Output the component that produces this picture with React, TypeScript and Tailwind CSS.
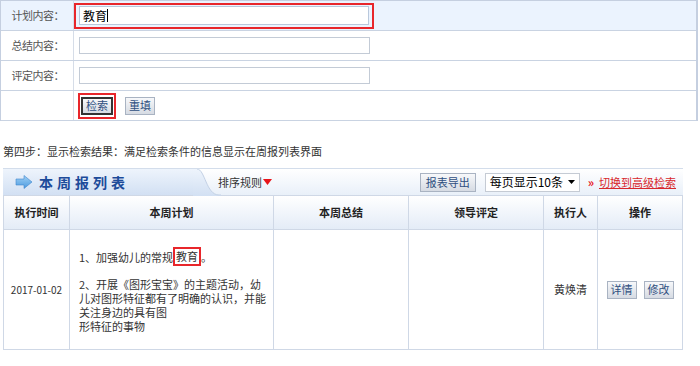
const font = { fontFamily: '"SimSun","Noto Sans CJK SC","Liberation Sans",sans-serif' }

function FormRow({ label, children, bg }: { label: string; children?: React.ReactNode; bg?: string }) {
  return (
    <div className={`grid grid-cols-[73px_1fr] h-[30px] border-b border-[#c9d3e2] ${bg ?? ''}`}>
      <div className="flex items-center justify-end pr-[9px] border-r border-[#d6dde8] text-[11px] tracking-[-0.5px] text-[#555]">
        {label}
      </div>
      <div className="flex items-center pl-[5px]">{children}</div>
    </div>
  )
}

function Btn({ children, focus }: { children: React.ReactNode; focus?: boolean }) {
  return (
    <span
      className={`inline-flex items-center justify-center h-[18px] px-[3px] text-[11px] text-[#2f4f7f] bg-gradient-to-b from-[#f7f8fa] to-[#d6dbe3] border ${
        focus ? 'border-[#333] border-2' : 'border-[#a9b3c2]'
      }`}
    >
      {children}
    </span>
  )
}

export default function App() {
  return (
    <div className="w-[700px] h-[366px] bg-white text-[#333] overflow-hidden" style={font}>
      {/* search form */}
      <div className="w-[698px] border-l border-r-2 border-t border-[#c5cfe0] border-r-[#c5cfe0]">
        <FormRow label="计划内容：" bg="bg-[#ebf3fe]">
          <div className="-ml-[5px] w-[300px] h-[26px] border-2 border-[#e8262b] flex items-center px-[3px]">
            <div className="w-full h-[19px] bg-white border border-[#b9c8dc] flex items-center pl-[3px] text-[12px] text-black">
              教育<span className="w-px h-[13px] bg-black" />
            </div>
          </div>
        </FormRow>
        <FormRow label="总结内容：">
          <div className="w-[291px] h-[17px] bg-white border border-[#c3cbd6]" />
        </FormRow>
        <FormRow label="评定内容：">
          <div className="w-[291px] h-[17px] bg-white border border-[#c3cbd6]" />
        </FormRow>
        <FormRow label="">
          <div className="flex items-center gap-[9px] -ml-[1px]">
            <span className="border-2 border-[#e8262b] p-[1px] h-[26px] flex items-center">
              <Btn focus>检索</Btn>
            </span>
            <Btn>重填</Btn>
          </div>
        </FormRow>
      </div>

      <div className="mt-[23px] pl-[3px] text-[11px] leading-[14px] text-[#333]">
        第四步：显示检索结果：满足检索条件的信息显示在周报列表界面
      </div>

      {/* list */}
      <div className="mt-[10px] ml-[3px] w-[680px]">
        <div className="relative flex items-stretch h-[27px] border-t border-[#d3ddeb] bg-gradient-to-b from-white to-[#e9f0f9]">
          <div className="flex items-center w-[190px] pl-[12px] bg-gradient-to-b from-[#eef4fc] to-[#d2e0f3]">
            <svg width="18" height="14" viewBox="0 0 18 14">
              <defs>
                <linearGradient id="ar" x1="0" y1="0" x2="0" y2="1">
                  <stop offset="0" stopColor="#9fd0f5" />
                  <stop offset="1" stopColor="#4d9be0" />
                </linearGradient>
              </defs>
              <path d="M1 4h8V0.5l8 6.5-8 6.5V10H1z" fill="url(#ar)" stroke="#3f86cc" strokeWidth="0.6" />
            </svg>
            <span className="ml-[6px] text-[14px] font-bold tracking-[4px] text-[#1d4b9a]">本周报列表</span>
          </div>
          <svg width="28" height="27" viewBox="0 0 28 27" preserveAspectRatio="none" className="shrink-0">
            <defs>
              <linearGradient id="tb" x1="0" y1="0" x2="0" y2="1">
                <stop offset="0" stopColor="#eef4fc" />
                <stop offset="1" stopColor="#d2e0f3" />
              </linearGradient>
            </defs>
            <path d="M0 0H4C12 0 13 26 26 26H28V27H0z" fill="url(#tb)" />
            <path d="M4 0C12 0 13 26 26 26H28" fill="none" stroke="#c3d1e5" strokeWidth="1" />
          </svg>
          <div className="flex items-center text-[11px] text-[#333] ml-[-3px]">
            排序规则
            <svg width="9" height="6" viewBox="0 0 9 6" className="ml-[1px]">
              <path d="M0 0h9L4.5 6z" fill="#e8151b" />
            </svg>
          </div>
          <div className="flex-1" />
          <div className="flex items-center">
            <span className="inline-flex items-center justify-center w-[56px] h-[19px] text-[11px] text-[#2f4f7f] bg-gradient-to-b from-[#f7f8fa] to-[#d6dbe3] border border-[#a9b3c2]">
              报表导出
            </span>
            <span className="ml-[9px] inline-flex items-center justify-between w-[95px] h-[19px] bg-white border border-[#c5cbd4] pl-[4px] pr-[4px] text-[12px] text-black">
              每页显示10条
              <svg width="7" height="4" viewBox="0 0 7 4">
                <path d="M0 0h7L3.5 4z" fill="#000" />
              </svg>
            </span>
            <span className="ml-[8px] text-[12px] font-bold text-[#e8151b]">»</span>
            <span className="ml-[5px] mr-[7px] text-[11px] text-[#d8272b] underline">切换到高级检索</span>
          </div>
        </div>

        <div className="border-l border-b border-r border-[#cfd8e6]">
          <div className="grid grid-cols-[66px_204px_135px_135px_54px_1fr] h-[34px] bg-gradient-to-b from-white to-[#e4ecf7] border-t border-[#cfd8e6] text-[11px] font-bold text-[#222]">
            <div className="flex items-center justify-center border-r border-[#cfd8e6]">执行时间</div>
            <div className="flex items-center justify-center border-r border-[#cfd8e6]">本周计划</div>
            <div className="flex items-center justify-center border-r border-[#cfd8e6]">本周总结</div>
            <div className="flex items-center justify-center border-r border-[#cfd8e6]">领导评定</div>
            <div className="flex items-center justify-center border-r border-[#cfd8e6]">执行人</div>
            <div className="flex items-center justify-center">操作</div>
          </div>
          <div className="grid grid-cols-[66px_204px_135px_135px_54px_1fr] h-[120px] border-t border-[#cfd8e6] text-[11px] text-[#333]">
            <div className="flex items-center justify-center border-r border-[#cfd8e6] text-[10px]">2017-01-02</div>
            <div className="flex flex-col justify-center pl-[9px] border-r border-[#cfd8e6] leading-[14px] whitespace-nowrap">
              <div className="flex items-center h-[20px]">
                1、加强幼儿的常规
                <span className="border-2 border-[#e8262b] px-[1px] leading-[15px]">教育</span>。
              </div>
              <div className="mt-[10px]">2、开展《图形宝宝》的主题活动，幼</div>
              <div>儿对图形特征都有了明确的认识，并能</div>
              <div>关注身边的具有图</div>
              <div>形特征的事物</div>
            </div>
            <div className="border-r border-[#cfd8e6]" />
            <div className="border-r border-[#cfd8e6]" />
            <div className="flex items-center justify-center border-r border-[#cfd8e6]">黄焕清</div>
            <div className="flex items-center justify-center gap-[7px]">
              <Btn>详情</Btn>
              <Btn>修改</Btn>
            </div>
          </div>
        </div>
      </div>
    </div>
  )
}
